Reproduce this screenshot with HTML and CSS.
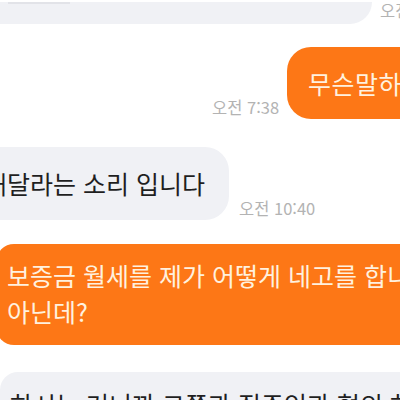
FILE: index.html
```html
<!DOCTYPE html>
<html lang="ko">
<head>
<meta charset="utf-8">
<link rel="stylesheet" href="styles.css">
</head>
<body>
<div class="chat">
  <div class="row row-top">
    <div class="bubble in top-bubble"><span class="strip"></span></div>
    <span class="time">오전 7:35</span>
  </div>
  <div class="row row-out1">
    <span class="time">오전 7:38</span>
    <div class="bubble out single">무슨말하시는지</div>
  </div>
  <div class="row row-in2">
    <div class="bubble in single">해달라는 소리 입니다</div>
    <span class="time">오전 10:40</span>
  </div>
  <div class="row row-out3">
    <div class="bubble out multi">보증금 월세를 제가 어떻게 네고를 합니까<br>아닌데?</div>
  </div>
  <div class="row row-in4">
    <div class="bubble in bottom-bubble">하시는 거니까 그쪽과 집주인과 협의 하시</div>
  </div>
</div>
</body>
</html>
```
FILE: styles.css
```css
* { box-sizing: border-box; }
html, body {
  margin: 0;
  padding: 0;
  background: #ffffff;
}
body {
  font-family: "Noto Sans CJK KR", "Noto Sans", sans-serif;
  width: 400px;
  height: 400px;
  overflow: hidden;
}
.chat {
  width: 400px;
  height: 400px;
  overflow: hidden;
  display: flex;
  flex-direction: column;
}
.row {
  display: flex;
  align-items: flex-end;
  flex-shrink: 0;
  white-space: nowrap;
}
.bubble {
  font-size: 25px;
  white-space: nowrap;
  flex-shrink: 0;
}
.bubble.in {
  background: #f0f1f5;
  color: #1f1f1f;
}
.bubble.out {
  background: #fd7716;
  color: #fff1df;
}
.time {
  font-size: 16.5px;
  line-height: 20px;
  color: #b3b3b3;
  flex-shrink: 0;
}

/* top partial bubble */
.row-top {
  gap: 8px;
}
.top-bubble {
  width: 372px;
  height: 22px;
  border-radius: 0 0 22px 0;
  position: relative;
}
.strip {
  position: absolute;
  left: 8px;
  top: 0;
  width: 62px;
  height: 2px;
  background: #e2e3e8;
}
.row-top .time {
  margin-bottom: 4px;
}

/* outgoing short */
.row-out1 {
  margin-top: 23px;
  padding-left: 212px;
  gap: 8px;
}
.row-out1 .time {
  margin-bottom: 2px;
}
.single {
  line-height: 32px;
  padding: 20px 22px;
  border-radius: 24px;
}
.row-out1 .bubble {
  height: 72px;
  padding-left: 21px;
  letter-spacing: 0.5px;
}

/* incoming */
.row-in2 {
  margin-top: 28px;
  margin-left: -16px;
  gap: 10px;
}
.row-in2 .bubble {
  height: 73px;
  padding: 20px 24px 20px 0;
  border-radius: 0 24px 24px 0;
}
.row-in2 .time {
  margin-bottom: 2px;
}

/* outgoing long */
.row-out3 {
  margin-top: 24px;
  margin-left: -4px;
}
.multi {
  line-height: 36px;
  padding: 13px 20px 16px 11px;
  border-radius: 18px 0 0 18px;
  width: 440px;
  overflow: hidden;
}

/* bottom partial */
.row-in4 {
  margin-top: 27px;
}
.bottom-bubble {
  width: 440px;
  height: 60px;
  line-height: 32px;
  padding: 16px 10px;
  border-radius: 18px 0 0 0;
}
```
